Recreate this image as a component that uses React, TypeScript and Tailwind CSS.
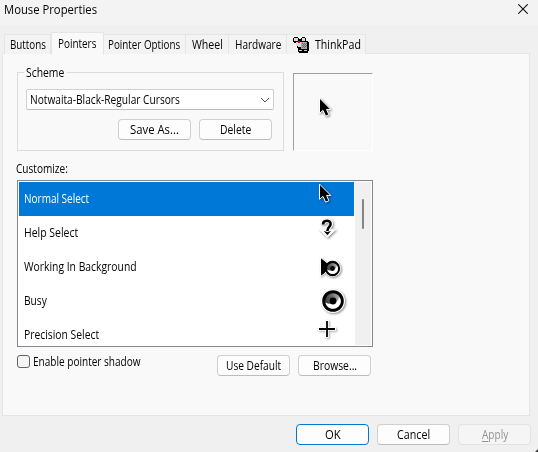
import { useLayoutEffect, useRef, useState } from "react";
import type { ReactNode } from "react";

function Label({ children, width }: { children: ReactNode; width: number }) {
  const inner = useRef<HTMLSpanElement>(null);
  const [scale, setScale] = useState(1);
  useLayoutEffect(() => {
    if (inner.current) setScale(width / inner.current.offsetWidth);
  }, [width]);
  return (
    <span className="inline-block shrink-0" style={{ width }}>
      <span ref={inner} className="inline-block origin-left" style={{ transform: `scaleX(${scale})` }}>{children}</span>
    </span>
  );
}

function Arrow({ className = "" }: { className?: string }) {
  return (
    <svg width="16" height="22" viewBox="0 0 16 22" className={`overflow-visible drop-shadow-[1px_1px_1px_rgba(0,0,0,0.45)] ${className}`}>
      <path d="M1.5 1V16.3L5 13.4L7.6 19.2L10.9 17.8L8.6 12.4H12.8Z" fill="#000" stroke="#fff" strokeWidth="1" />
    </svg>
  );
}

function HelpCursor() {
  return (
    <svg width="16" height="20" viewBox="0 0 16 20" className="overflow-visible drop-shadow-[1px_1px_1px_rgba(0,0,0,0.45)]">
      <path d="M3 6.5C3 1.6 11 1.6 11 6C11 9 7.4 9 7.4 13M3.8 13.5H11L7.4 17Z" fill="none" stroke="#fff" strokeWidth="4.4" />
      <path d="M3 6.5C3 1.6 10.6 1.6 10.6 6C10.6 9 7.4 9 7.4 13" fill="none" stroke="#000" strokeWidth="2.6" />
      <path d="M3.8 13L7.4 14L11 13L7.4 17.2Z" fill="#000" />
    </svg>
  );
}

function Disc({ size }: { size: number }) {
  return (
    <svg width={size} height={size} viewBox="0 0 24 24" className="overflow-visible drop-shadow-[1px_1px_1px_rgba(0,0,0,0.45)]">
      <defs>
        <linearGradient id="ring" x1="0" y1="0.5" x2="1" y2="0.3">
          <stop offset="0" stopColor="#333" />
          <stop offset=".45" stopColor="#666" />
          <stop offset="1" stopColor="#ccc" />
        </linearGradient>
      </defs>
      <circle cx="12" cy="12" r="12" fill="#fff" />
      <circle cx="12" cy="12" r="9.3" fill="url(#ring)" stroke="#000" strokeWidth="3" />
      <path d="M4.4 13.5C5.4 17.5 8.4 19.8 12 19.8A7.8 7.8 0 0 0 19.8 12C19.8 10.5 19 9 18 8.5C17 12 15 14.5 11 14.8C8 15 6 14.5 4.4 13.5Z" fill="#fff" />
      <circle cx="12" cy="12" r="3.4" fill="#000" />
    </svg>
  );
}

function WorkingCursor() {
  return (
    <div className="relative h-[22px] w-[22px]">
      <svg width="22" height="22" viewBox="0 0 22 22" className="absolute overflow-visible drop-shadow-[1px_1px_1px_rgba(0,0,0,0.3)]">
        <path d="M.5 .5V19.5L6 15L13 11Z" fill="#000" stroke="#fff" />
      </svg>
      <div className="absolute top-[3px] left-[4px]"><Disc size={17} /></div>
      <svg width="22" height="22" viewBox="0 0 22 22" className="absolute overflow-visible">
        <path d="M1 1.5V18.5L6 14.5V9L8.5 7.6Z" fill="#000" />
      </svg>
    </div>
  );
}

function CrossCursor() {
  return (
    <svg width="18" height="18" viewBox="0 0 18 18" className="overflow-visible drop-shadow-[1px_1px_1px_rgba(0,0,0,0.35)]">
      <path d="M9 0V18M0 9H18" stroke="#fff" strokeWidth="3.5" />
      <path d="M9 1V17M1 9H17" stroke="#000" strokeWidth="1.8" />
    </svg>
  );
}

function TrackPointIcon() {
  return (
    <svg width="16" height="16" viewBox="0 0 16 16" shapeRendering="crispEdges">
      <path d="M1 0h4v1h1v1h2V1h1V0h3v1h1v3h2v1h1v9h-1v2H6v-1H5v-4H4V9H3V6H1V5H0V1h1z" fill="#000" />
      <path d="M1 1h4v3H1zM9 1h3v3H9zM3 5h5v4H3zM5 9h3v1H5z" fill="#d8d8d8" />
      <path d="M8 5h6v7H8z" fill="#aaa" />
      <path d="M9 6h1v1H9zM11 6h1v1h-1zM13 6h1v1h-1zM10 7h1v1h-1zM12 7h1v1h-1zM9 8h1v1H9zM11 8h1v1h-1zM13 8h1v1h-1zM10 9h1v1h-1zM12 9h1v1h-1zM9 10h1v1H9zM11 10h1v1h-1z" fill="#666" />
      <path d="M6 13h3v1H6zM11 13h3v1h-3z" fill="#ccc" />
      <path d="M5 4h2v2H5z" fill="#f00" />
    </svg>
  );
}

function Button({ label, width, className = "border-[#d0d0d0] border-b-[#bcbcbc] bg-[#fdfdfd]" }: { label: ReactNode; width: number; className?: string }) {
  return (
    <button className={`flex h-[21px] w-[73px] shrink-0 items-center justify-center rounded-[4px] border ${className}`}>
      <Label width={width}>{label}</Label>
    </button>
  );
}

const tabs = [
  { label: "Buttons", box: "w-[47px] pl-[5px]", width: 36 },
  { label: "Pointers", box: "w-[53px] pl-[6px]", width: 38 },
  { label: "Pointer Options", box: "w-[82px] pl-[4px]", width: 72 },
  { label: "Wheel", box: "w-[43px] pl-[6px]", width: 31 },
  { label: "Hardware", box: "w-[58px] pl-[6px]", width: 46 },
  { label: "ThinkPad", box: "w-[79px] pl-[6px]", width: 46 },
];

const rows = [
  { label: "Normal Select", width: 65, icon: <Arrow />, at: "ml-[299px] mt-px" },
  { label: "Help Select", width: 54, icon: <HelpCursor />, at: "ml-[301px] mt-[2px]" },
  { label: "Working In Background", width: 113, icon: <WorkingCursor />, at: "ml-[301px] mt-[7px]" },
  { label: "Busy", width: 23, icon: <Disc size={24} />, at: "ml-[302px] mt-[5px]" },
  { label: "Precision Select", width: 75, icon: <CrossCursor />, at: "ml-[299px] mt-[2px]" },
];

export default function App() {
  return (
    <div className="relative flex h-[452px] w-[538px] flex-col overflow-hidden bg-[#f0f0f0] font-['Open_Sans',sans-serif] text-[12px] leading-[16px] whitespace-nowrap text-black">
      <header className="flex h-[25px] shrink-0 justify-between bg-[#f3f3f3] pt-[2px] pr-[10px] pl-[4px]">
        <Label width={93}>Mouse Properties</Label>
        <svg width="10" height="10" viewBox="0 0 10 10" className="mt-[2px]"><path d="M.3 .3L9.7 9.7M9.7 .3L.3 9.7" stroke="#111" strokeWidth="1.1" /></svg>
      </header>
      <nav className="z-10 flex h-[29px] shrink-0 items-end pl-[4px]">
        {tabs.map((tab, i) => (
          <div key={tab.label} className={`flex shrink-0 items-center border-t border-r border-[#e5e5e5] ${tab.box} ${i === 1 ? "-mb-px h-[23px] border-l bg-[#f9f9f9] pb-px" : "h-[20px] bg-[#f3f3f3]"} ${i === 0 ? "border-l" : ""}`}>
            {i === 5 && <span className="mr-[6px]"><TrackPointIcon /></span>}
            <Label width={tab.width}>{tab.label}</Label>
          </div>
        ))}
      </nav>
      <main className="-mt-px ml-[2px] h-[363px] w-[528px] shrink-0 border border-[#e5e5e5] bg-[#f9f9f9] pl-[14px]">
        <div className="flex h-[98px] gap-[9px] pt-[18px]">
          <section className="h-[79px] w-[267px] border border-[#dcdcdc] pl-[8px]">
            <div className="-mt-[8px] -ml-[2px] w-[43px] bg-[#f9f9f9] pl-[2px]"><Label width={38}>Scheme</Label></div>
            <div className="mt-[8px] flex h-[21px] w-[248px] items-center justify-between rounded-[2px] border border-[#d0d0d0] border-b-[#bcbcbc] bg-white pr-[3px] pl-[3px]">
              <Label width={150}>Notwaita-Black-Regular Cursors</Label>
              <svg width="10" height="6" viewBox="0 0 10 6" fill="none" stroke="#555"><path d="M1 1L5 5L9 1" /></svg>
            </div>
            <div className="mt-[9px] ml-[92px] flex gap-[8px]">
              <Button label="Save As..." width={49} />
              <Button label="Delete" width={31} />
            </div>
          </section>
          <section className="mt-px h-[78px] w-[80px] border border-t-[#a0a0a0] border-r-white border-b-white border-l-[#a0a0a0] pt-[23px] pl-[25px]"><Arrow className="-ml-px" /></section>
        </div>
        <div className="-ml-px mt-[9px] h-[19px]"><Label width={52}>Customize:</Label></div>
        <section className="flex h-[167px] w-[356px] justify-between border border-[#828790] bg-white p-px">
          <div className="h-full w-[335px] overflow-hidden">
            {rows.map((row, i) => (
              <div key={row.label} className={`relative flex h-[34px] items-center pl-[5px] ${i === 0 ? "bg-[#0078d7] text-white" : ""}`}>
                <Label width={row.width}>{row.label}</Label>
                <span className={`absolute top-0 left-0 ${row.at}`}>{row.icon}</span>
              </div>
            ))}
          </div>
          <div className="flex h-full w-[16px] justify-center bg-[#f0f0f0] pt-[17px]"><div className="h-[30px] w-[2px] rounded bg-[#858585]" /></div>
        </section>
        <div className="mt-[8px] flex">
          <div className="h-[13px] w-[13px] rounded-[3px] border border-[#626262] bg-[#f5f5f5]" />
          <span className="-mt-px ml-[3px] w-[184px]"><Label width={108}>Enable pointer shadow</Label></span>
          <div className="flex gap-[8px]">
            <Button label="Use Default" width={55} />
            <Button label="Browse..." width={44} />
          </div>
        </div>
      </main>
      <footer className="mt-[8px] flex gap-[8px] pl-[296px]">
        <Button className="border-[#0078d4] bg-[#fdfdfd]" label="OK" width={16} />
        <Button label="Cancel" width={33} />
        <Button className="border-[#e2e2e2] bg-[#f5f5f5] text-[#929292]" label={<><span className="underline underline-offset-2">A</span>pply</>} width={26} />
      </footer>
      <svg width="3" height="3" className="absolute right-0 bottom-0"><path d="M3 0V3H0Z" fill="#333" /></svg>
    </div>
  );
}
